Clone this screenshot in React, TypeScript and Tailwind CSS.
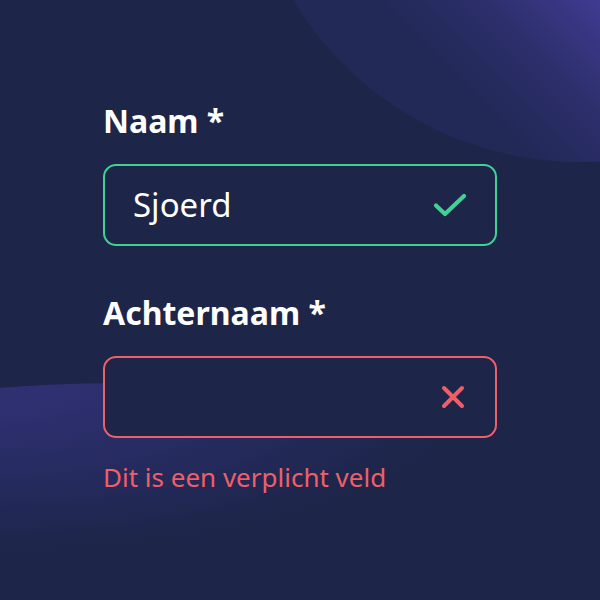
import React from 'react';

export default function App() {
  return (
    <div
      className="relative w-[600px] h-[600px] overflow-hidden bg-[#1d2549]"
      style={{ fontFamily: '"Noto Sans", "Open Sans", sans-serif' }}
    >
      {/* background blobs */}
      <div className="absolute left-[245px] top-[-508px] w-[670px] h-[670px] rounded-full bg-gradient-to-tr from-[#222957] from-22% via-[#2d2f6c] via-30% to-[#433d98] to-40%" />
      <div className="absolute left-[-240px] top-[383px] w-[720px] h-[170px] rounded-[50%] bg-radial-[at_30%_0%] from-[#2f3072] from-10% via-[#262b5f] via-40% to-[#1d2549] to-70%" />

      <div className="relative flex flex-col pl-[103px] pt-[100px] w-[497px]">
        <label className="text-[32px] leading-[42px] font-bold text-white">Naam *</label>
        <div className="mt-[22px] h-[82px] flex items-center justify-between rounded-[13px] border-[2.5px] border-[#41d196] bg-[#1d2549] pl-[28px] pr-[28px]">
          <span className="text-[33px] text-white">Sjoerd</span>
          <svg width="34" height="26" viewBox="0 0 34 26" fill="none">
            <path d="M3 13.5 L12 22 L31 4" stroke="#41d196" strokeWidth="4.2" strokeLinecap="round" strokeLinejoin="round" />
          </svg>
        </div>

        <label className="mt-[46px] text-[32px] leading-[42px] font-bold text-white">Achternaam *</label>
        <div className="mt-[22px] h-[82px] flex items-center justify-end rounded-[13px] border-[2.5px] border-[#ef5f69] bg-[#1d2549] pr-[30px]">
          <svg width="24" height="24" viewBox="0 0 24 24" fill="none">
            <path d="M3 3 L21 21 M21 3 L3 21" stroke="#ef5f69" strokeWidth="4" strokeLinecap="round" />
          </svg>
        </div>
        <p className="mt-[23px] text-[26px] leading-[32px] text-[#ef5f69]">Dit is een verplicht veld</p>
      </div>
    </div>
  );
}
